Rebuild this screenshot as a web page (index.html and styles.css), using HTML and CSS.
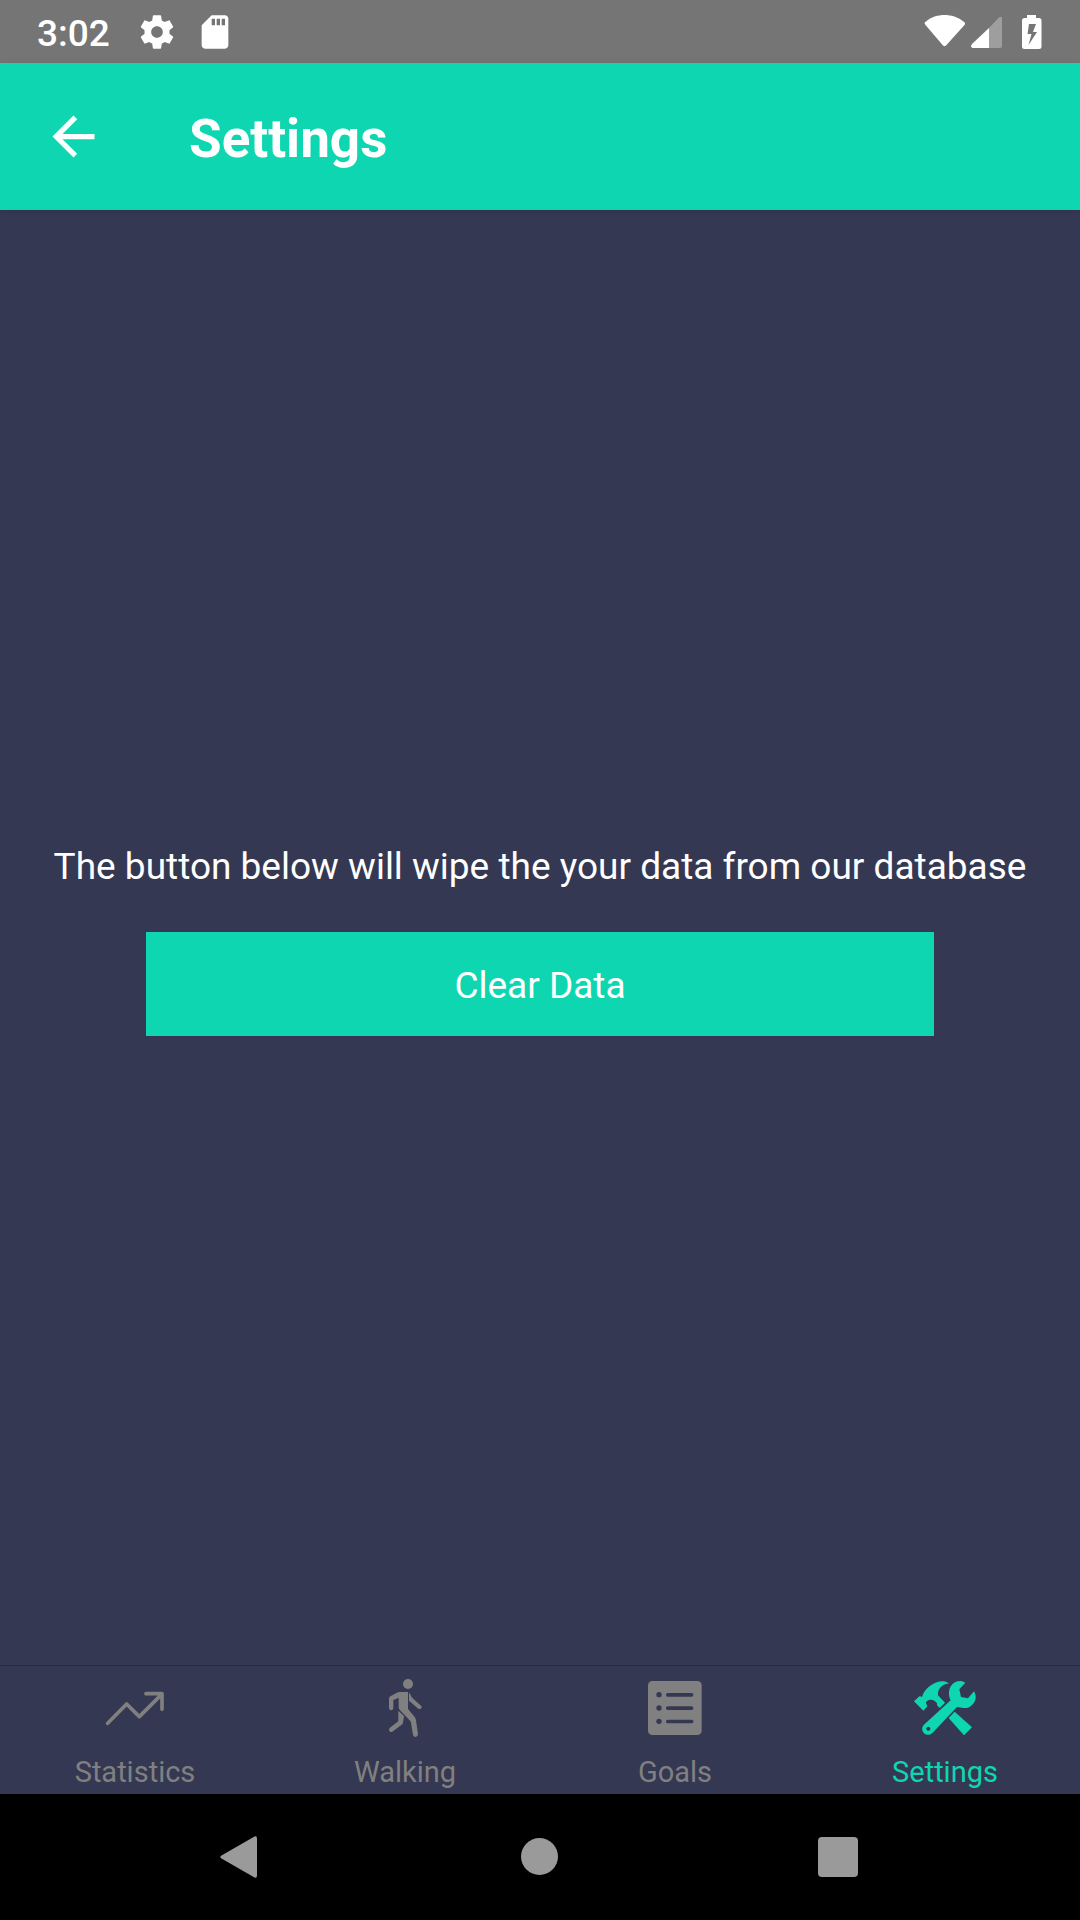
FILE: index.html
```html
<!DOCTYPE html>
<html lang="en">
<head>
<meta charset="utf-8">
<meta name="viewport" content="width=device-width, initial-scale=1">
<title>Settings</title>
<link rel="stylesheet" href="styles.css">
</head>
<body>
<div class="status-bar">
  <span class="clock">3:02</span>
  <svg class="status-icon gear" viewBox="0 0 24 24" aria-hidden="true"><path d="M19.43 12.98c.04-.32.07-.64.07-.98s-.03-.66-.07-.98l2.11-1.65c.19-.15.24-.42.12-.64l-2-3.46c-.12-.22-.39-.3-.61-.22l-2.49 1c-.52-.4-1.08-.73-1.69-.98l-.38-2.65C14.460 2.180 14.250 2 14 2h-4c-.25 0-.46.18-.49.42l-.38 2.65c-.61.25-1.170.59-1.69.98l-2.490-1c-.23-.09-.49 0-.61.22l-2 3.460c-.13.22-.07.49.12.64l2.110 1.650c-.04.32-.07.65-.07.98s.03.66.07.98l-2.110 1.650c-.19.15-.24.42-.12.64l2 3.460c.12.22.39.3.61.22l2.490-1c.52.4 1.080.73 1.690.98l.38 2.650c.03.24.24.42.49.42h4c.25 0 .46-.18.49-.42l.38-2.650c.61-.25 1.170-.59 1.690-.98l2.490 1c.23.09.49 0 .61-.22l2-3.460c.12-.22.07-.49-.12-.64l-2.110-1.650zM12 15.500c-1.930 0-3.500-1.570-3.500-3.500s1.570-3.500 3.500-3.500 3.500 1.570 3.500 3.500-1.570 3.500-3.500 3.500z"/></svg>
  <svg class="status-icon sd-card" viewBox="0 0 24 24" aria-hidden="true"><path d="M18 2h-8L4.020 8 4 20c0 1.100.9 2 2 2h12c1.100 0 2-.9 2-2V4c0-1.100-.9-2-2-2zm-6 6h-2V4h2v4zm3 0h-2V4h2v4zm3 0h-2V4h2v4z"/></svg>
  <svg class="system-icons" viewBox="0 0 120 36" aria-hidden="true">
    <path d="M2 7.500C7 3 14 1 20.500 1S34 3 39.500 7.500Q42 9 40.500 11L22 31.500Q20.500 33 19 31.500L1.500 11Q-.5 9 2 7.500z"/>
    <path d="M65 14V34H49Q45.500 33 48 30z"/>
    <path class="faint" d="M65 14L75 3.500Q78 1.500 78 4.500V32Q78 34 76 34H65z"/>
    <path fill-rule="evenodd" d="M103 1h9v3h3q2.500 0 2.500 2.500V32.500q0 2.500-2.500 2.500H100.500Q98 35 98 32.500V6.500Q98 4 100.500 4H103zM105 10L103.500 20H107.500L104.500 31L113 18H109L112 10z"/>
  </svg>
</div>

<header class="app-bar">
  <button class="back" type="button" aria-label="Back">
    <svg viewBox="0 0 24 24" aria-hidden="true"><path d="M20 11H7.830l5.590-5.590L12 4l-8 8 8 8 1.410-1.410L7.830 13H20v-2z"/></svg>
  </button>
  <h1 class="title">Settings</h1>
</header>

<main class="content">
  <p class="message">The button below will wipe the your data from our database</p>
  <button class="clear" type="button">Clear Data</button>
</main>

<nav class="tabs" aria-label="Sections">
  <a class="tab" href="#statistics">
    <svg class="tab-icon line" viewBox="126 60 198 198" aria-hidden="true"><path d="M143 205L200 147L238 185L304 119M258 116H306V163"/></svg>
    <span>Statistics</span>
  </a>
  <a class="tab" href="#walking">
    <svg class="tab-icon" viewBox="96 60 198 198" aria-hidden="true">
      <circle cx="204" cy="87" r="15"/>
      <path d="M178 111H204V162L224 186Q227 190 228 196L234 238Q234 245 227 246Q221 246 219 240L213 203Q212 199 209 196L180 166Q176 162 176 157V128L160 135V160Q159 166 153 166Q147 165 147 160V131Q147 127 151 124L171 113Q174 111 178 111z"/>
      <path d="M207 113Q211 116 213 123Q215 127 218 130L243 152Q247 156 244 160Q240 164 235 161L207 137z"/>
      <path d="M175 167L192 183L189 203Q188 207 185 209L157 230Q152 233 148 228Q145 223 149 219L173 200Q175 198 175 195z"/>
    </svg>
    <span>Walking</span>
  </a>
  <a class="tab" href="#goals">
    <svg class="tab-icon" viewBox="66 60 198 198" aria-hidden="true">
      <rect x="84" y="78" width="161" height="162" rx="13"/>
      <g class="cutout">
        <circle cx="117" cy="119" r="8"/><circle cx="117" cy="159" r="8"/><circle cx="117" cy="199" r="8"/>
        <rect x="138" y="114" width="82" height="11" rx="5"/><rect x="138" y="154" width="82" height="11" rx="5"/><rect x="138" y="194" width="82" height="11" rx="5"/>
      </g>
    </svg>
    <span>Goals</span>
  </a>
  <a class="tab active" href="#settings" aria-current="page">
    <svg class="tab-icon" viewBox="126 60 198 198" aria-hidden="true">
      <path d="M132 139L148 124L157 125C160 110 172 98 184 90C200 79 222 74 237 85C214 89 203 102 204 121L225 143L209 159L201 151V145C195 136 180 129 168 141C168 148 172 150 172 154L160 167z"/>
      <path d="M254 170L306 217L282 241L236 189z"/>
      <path fill-rule="evenodd" d="M286 83L268 103L273 126L294 130L312 109C324 128 314 150 294 158C282 161 270 157 261 156L188 233Q175 245 162 235Q151 223 161 210L242 136C235 122 235 105 243 93C253 78 272 74 286 83zM175 215a6 6 0 1 0 .1 0z"/>
    </svg>
    <span>Settings</span>
  </a>
</nav>

<div class="system-nav">
  <button type="button" aria-label="System back"><svg viewBox="0 0 48 48" aria-hidden="true"><path d="M5.500 22.500L38.500 3.500Q41 2.500 41 5.500V42.500Q41 45.500 38.500 44.500L5.500 25.500Q3 24 5.500 22.500z"/></svg></button>
  <button type="button" aria-label="Home"><svg viewBox="0 0 48 48" aria-hidden="true"><circle cx="23.500" cy="23.500" r="18.500"/></svg></button>
  <button type="button" aria-label="Recent apps"><svg viewBox="0 0 48 48" aria-hidden="true"><rect x="2" y="4" width="40" height="40" rx="4"/></svg></button>
</div>
</body>
</html>
```

FILE: styles.css
```css
:root {
  --accent: #0ed6b1;
  --surface: #353852;
  --muted: #808080;
}

* {
  box-sizing: border-box;
}

body {
  margin: 0;
  min-height: 100vh;
  display: flex;
  flex-direction: column;
  background: var(--surface);
  color: #fff;
  font-family: Roboto, "Noto Sans", sans-serif;
  font-size: 37px;
}

svg {
  display: block;
  fill: currentColor;
}

button {
  margin: 0;
  padding: 0;
  border: 0;
  background: none;
  color: inherit;
  font: inherit;
  cursor: pointer;
}

.status-bar {
  display: flex;
  align-items: center;
  height: 63px;
  padding: 0 36px 0 37px;
  background: #757575;
}

.clock {
  font-weight: 500;
  line-height: 44px;
  padding-top: 4px;
}

.status-icon {
  width: 40px;
  height: 40px;
}

.gear {
  margin-left: 27px;
}

.sd-card {
  margin-left: 18px;
}

.system-icons {
  width: 120px;
  height: 36px;
  margin-left: auto;
}

.faint {
  opacity: 0.3;
}

.app-bar {
  display: flex;
  align-items: center;
  gap: 84px;
  height: 147px;
  padding: 0 42px;
  background: var(--accent);
  box-shadow: 0 1px 6px rgba(0, 0, 0, 0.12);
}

.back svg {
  width: 63px;
  height: 63px;
}

.title {
  margin: 0;
  padding-top: 4px;
  font-size: 53px;
  line-height: 62px;
  font-weight: 700;
}

.content {
  flex: 1;
  display: flex;
  flex-direction: column;
  align-items: center;
  justify-content: center;
  gap: 37px;
}

.message {
  margin: 0;
  line-height: 56px;
  text-align: center;
}

.clear {
  width: 73%;
  height: 104px;
  padding-top: 2px;
  background: var(--accent);
}

.tabs {
  display: flex;
  height: 129px;
  border-top: 1px solid #292b40;
}

.tab {
  flex: 1;
  display: flex;
  flex-direction: column;
  align-items: center;
  justify-content: space-between;
  padding: 9px 0 4px;
  color: var(--muted);
  font-size: 29px;
  line-height: 36px;
  text-decoration: none;
}

.tab-icon {
  width: 66px;
  height: 66px;
}

.line {
  fill: none;
  stroke: currentColor;
  stroke-width: 11;
  stroke-linecap: round;
  stroke-linejoin: round;
}

.cutout {
  fill: var(--surface);
}

.active {
  color: var(--accent);
}

.system-nav {
  display: flex;
  align-items: center;
  height: 126px;
  padding: 0 90px;
  background: #000;
  color: #9a9a9a;
}

.system-nav button {
  flex: 1;
  display: flex;
  justify-content: center;
}

.system-nav svg {
  width: 48px;
  height: 48px;
}
```
